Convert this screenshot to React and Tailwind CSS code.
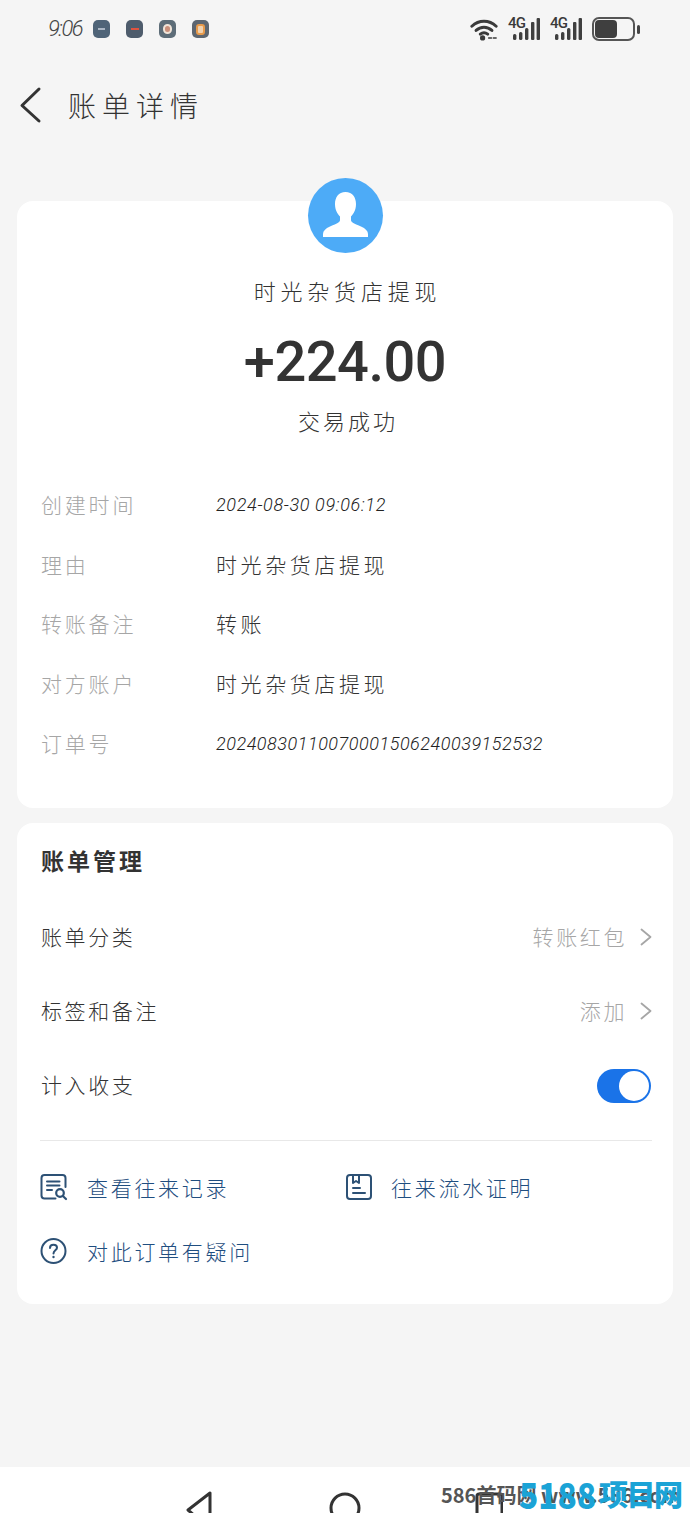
const details = [
  { label: "创建时间", value: "2024-08-30 09:06:12", cls: "text-[18px] font-light italic text-[#222] font-['Roboto',sans-serif] tracking-[0.66px]" },
  { label: "理由", value: "时光杂货店提现", cls: "text-[21px] font-light tracking-[3.6px] text-[#333]" },
  { label: "转账备注", value: "转账", cls: "text-[21px] font-light tracking-[3.6px] text-[#333]" },
  { label: "对方账户", value: "时光杂货店提现", cls: "text-[21px] font-light tracking-[3.6px] text-[#333]" },
  { label: "订单号", value: "20240830110070001506240039152532", cls: "text-[18px] font-light italic text-[#222] font-['Roboto',sans-serif] tracking-[0.53px]" },
];

function NotifIcons() {
  return (
    <div className="flex gap-[16px]">
      <div className="w-[17px] h-[18px] rounded-[5px] bg-[#4f6478] flex items-center justify-center">
        <div className="w-[7px] h-[2px] bg-[#aab6c4]" />
      </div>
      <div className="w-[17px] h-[18px] rounded-[5px] bg-[#4e5c6c] flex items-center justify-center">
        <div className="w-[8px] h-[2px] bg-[#e0533f]" />
      </div>
      <div className="w-[17px] h-[18px] rounded-[5px] bg-[#5d6d78] flex items-center justify-center">
        <div className="w-[9px] h-[10px] rounded-full border-2 border-[#f0e4d8] bg-[#c98f7a]" />
      </div>
      <div className="w-[17px] h-[18px] rounded-[5px] bg-[#5d6670] flex items-center justify-center">
        <div className="w-[9px] h-[11px] rounded-[3px] border-2 border-[#e79a4b] bg-[#f0d2b0]" />
      </div>
    </div>
  );
}

function Signal() {
  return (
    <div className="relative w-[32px] h-[24px]">
      <span className="absolute left-0 -top-[1px] text-[15px] leading-[15px] font-medium text-[#3a3a3a] font-['Roboto',sans-serif] tracking-[-0.8px]">4G</span>
      <svg className="absolute inset-0" width="32" height="24" viewBox="0 0 32 24" fill="#3f3f3f">
        <rect x="5" y="17" width="3.4" height="6" rx="1.5" />
        <rect x="11" y="15" width="3.4" height="8" rx="1.5" />
        <rect x="17" y="11" width="3.4" height="12" rx="1.5" />
        <rect x="23" y="5" width="3.4" height="18" rx="1" />
        <rect x="28.6" y="1" width="3.4" height="22" rx="1" />
      </svg>
    </div>
  );
}

function Wifi() {
  return (
    <svg width="28" height="23" viewBox="0 0 30 24" fill="none" stroke="#3a3a3a" strokeWidth="3.2" strokeLinecap="round">
      <path d="M2 8.5C9.5 1.5 20.5 1.5 28 8.5" />
      <path d="M6.5 13C11.5 8.5 18.5 8.5 23.5 13" />
      <path d="M11 17C13.5 15 16.5 15 19 17" />
      <circle cx="13.5" cy="21" r="2.8" fill="#3a3a3a" stroke="none" />
      <path d="M20 21h3M25 21h3" strokeWidth="1.6" />
    </svg>
  );
}

function Battery() {
  return (
    <div className="flex items-center gap-[2px]">
      <div className="w-[43px] h-[24px] rounded-[7px] border-2 border-[#555] p-[1px]">
        <div className="w-[22px] h-full rounded-[4px] bg-[#3f3f3f]" />
      </div>
      <div className="w-[3px] h-[9px] rounded-[2px] bg-[#444]" />
    </div>
  );
}

function Chevron() {
  return (
    <svg width="12" height="18" viewBox="0 0 12 18" fill="none" stroke="#a6a6a6" strokeWidth="1.8" strokeLinecap="round" strokeLinejoin="round" className="ml-[13px] -mr-[1px]">
      <path d="M1.5 1.5L10.5 9L1.5 16.5" />
    </svg>
  );
}

function RecordIcon() {
  return (
    <svg width="28" height="28" viewBox="1.5 0 28 28" fill="none" stroke="#2d5175" strokeWidth="2" strokeLinecap="round" className="overflow-visible">
      <path d="M16 25.5H5C3 25.5 2 24.5 2 22.5V5C2 3 3 2 5 2H23C25 2 26 3 26 5V14" />
      <path d="M7.5 8.5H20M7.5 12.5H20M7.5 17H12.5" />
      <circle cx="20.5" cy="20" r="3.8" strokeWidth="2.2" />
      <path d="M23.4 23L26.5 26" strokeWidth="2.2" />
    </svg>
  );
}

function ProofIcon() {
  return (
    <svg width="28" height="28" viewBox="0 0 28 28" fill="none" stroke="#2d5175" strokeWidth="2" strokeLinecap="round" strokeLinejoin="round">
      <rect x="2" y="2" width="24" height="24" rx="3" />
      <path d="M8 2V10L11 8L14 10V2" />
      <path d="M8 15H15M8 20H20" />
    </svg>
  );
}

function HelpIcon() {
  return (
    <svg width="28" height="28" viewBox="1.5 0 28 28" fill="none" stroke="#2d5175" strokeWidth="2" strokeLinecap="round" className="overflow-visible">
      <circle cx="14" cy="14" r="12" />
      <path d="M10.5 11C10.5 9 12 7.8 14 7.8C16 7.8 17.5 9 17.5 10.8C17.5 13.2 14 13.6 14 16.4" />
      <circle cx="14" cy="20" r="1.2" fill="#2d5175" stroke="none" />
    </svg>
  );
}

function LinkItem({ icon, text, width }) {
  return (
    <div className={`flex items-center gap-[18px] ${width}`}>
      {icon}
      <span className="text-[21px] leading-[28px] font-light tracking-[2.7px] text-[#1f4e80] whitespace-nowrap">{text}</span>
    </div>
  );
}

function ManageRow({ label, children }) {
  return (
    <div className="h-[74px] flex items-center justify-between">
      <span className="text-[21px] font-light tracking-[2.6px] text-[#333]">{label}</span>
      {children}
    </div>
  );
}

export default function App() {
  return (
    <div className="relative w-[690px] h-[1513px] overflow-hidden flex flex-col bg-[#f5f5f5] font-['Noto_Sans_CJK_SC','Noto_Sans',sans-serif]">
      {/* status bar */}
      <div className="h-[58px] flex items-center justify-between pl-[48px] pr-[50px] shrink-0">
        <div className="flex items-center">
          <span className="w-[45px] text-[22px] leading-none italic font-light text-[#444] tracking-[-1.5px] font-['Roboto',sans-serif]">9:06</span>
          <NotifIcons />
        </div>
        <div className="flex items-center gap-[10px]">
          <Wifi />
          <Signal />
          <Signal />
          <Battery />
        </div>
      </div>

      {/* header */}
      <div className="h-[94px] flex items-center pl-[18px] shrink-0">
        <svg width="26" height="38" viewBox="0 0 26 38" fill="none" stroke="#333" strokeWidth="3" strokeLinecap="round" strokeLinejoin="round">
          <path d="M21 3L4 19.5L21 35" />
        </svg>
        <h1 className="ml-[24px] text-[28px] leading-none font-light tracking-[6px] text-[#333]">账单详情</h1>
      </div>

      {/* bill card */}
      <div className="mt-[49px] mx-[17px] h-[607px] rounded-[16px] bg-white shrink-0 flex flex-col">
        <div className="-mt-[23px] self-center w-[75px] h-[75px] rounded-full bg-[#4dabf7] overflow-hidden shrink-0">
          <svg width="75" height="75" viewBox="0 0 75 75" fill="#fff">
            <path d="M37.5 14C30.5 14 27 19.5 27 26C27 32 29.5 36 32 38.5V42C32 44.5 28 46 22 48.5C17.5 50.5 15 53 15 56V59H60V56C60 53 57.5 50.5 53 48.5C47 46 43 44.5 43 42V38.5C45.5 36 48 32 48 26C48 19.5 44.5 14 37.5 14Z" />
          </svg>
        </div>
        <div className="mt-[21px] pl-[5px] text-center text-[22px] leading-[32px] font-light tracking-[4.8px] text-[#333]">时光杂货店提现</div>
        <div className="mt-[24px] text-center text-[56px] leading-[64px] font-medium tracking-[-0.5px] text-[#333] font-['Roboto',sans-serif]">+224.00</div>
        <div className="mt-[10px] pl-[6px] text-center text-[22px] leading-[32px] font-light tracking-[3px] text-[#333]">交易成功</div>
        <div className="mt-[39px] px-[24px] flex flex-col">
          {details.map((d) => (
            <div key={d.label} className="h-[59.7px] flex items-center">
              <span className="w-[175px] text-[21px] font-light tracking-[2.8px] text-[#a6a6a6]">{d.label}</span>
              <span className={d.cls}>{d.value}</span>
            </div>
          ))}
        </div>
      </div>

      {/* manage card */}
      <div className="mt-[15px] mx-[17px] h-[481px] rounded-[16px] bg-white shrink-0 pl-[24px] pr-[22px] pt-[19px] flex flex-col">
        <h2 className="text-[23px] leading-[36px] font-bold tracking-[3px] text-[#333]">账单管理</h2>
        <div className="mt-[22px] flex flex-col">
          <ManageRow label="账单分类">
            <div className="flex items-center text-[#a6a6a6]">
              <span className="text-[21px] font-light tracking-[2.6px]">转账红包</span>
              <Chevron />
            </div>
          </ManageRow>
          <ManageRow label="标签和备注">
            <div className="flex items-center text-[#a6a6a6]">
              <span className="text-[21px] font-light tracking-[2.6px]">添加</span>
              <Chevron />
            </div>
          </ManageRow>
          <ManageRow label="计入收支">
            <div className="mt-[2px] w-[54px] h-[34px] rounded-full bg-[#1a73e8] flex items-center justify-end pr-[2px]">
              <div className="w-[30px] h-[30px] rounded-full bg-white" />
            </div>
          </ManageRow>
        </div>
        <div className="mt-[18px] -mx-[1px] h-px bg-[#e8e8e8]" />
        <div className="mt-[32px] flex">
          <LinkItem icon={<RecordIcon />} text="查看往来记录" width="w-[304px]" />
          <LinkItem icon={<ProofIcon />} text="往来流水证明" width="" />
        </div>
        <div className="mt-[36px]">
          <LinkItem icon={<HelpIcon />} text="对此订单有疑问" width="" />
        </div>
      </div>

      {/* nav bar, cut off by the bottom of the picture */}
      <div className="mt-[163px] flex-1 bg-white flex pt-[24px] pl-[186px]">
        <svg width="26" height="40" viewBox="0 0 26 40" fill="none" stroke="#333" strokeWidth="3" strokeLinejoin="round" className="shrink-0">
          <path d="M24 2V38L2 19Z" />
        </svg>
        <svg width="32" height="40" viewBox="0 0 32 40" fill="none" stroke="#333" strokeWidth="3" className="ml-[117px] shrink-0">
          <circle cx="16" cy="17" r="14" />
        </svg>
        <svg width="28" height="40" viewBox="0 0 28 40" fill="none" stroke="#333" strokeWidth="3" className="ml-[114px] mt-[1px] shrink-0">
          <rect x="2" y="2" width="25" height="36" rx="2" />
        </svg>
      </div>

      {/* watermark */}
      <div className="absolute left-[441px] top-[1482px] text-[20px] leading-[26px] font-bold text-[#555] whitespace-nowrap">586首码网 www.586.com</div>
      <div className="absolute left-[519px] top-[1474px] h-[38px] flex items-center font-black text-[#1ba3d6] whitespace-nowrap">
        <span className="w-[80px] text-[36px] leading-none scale-x-[0.88] origin-left">5188</span>
        <span className="text-[29px] leading-none tracking-[-1.5px]">项目网</span>
      </div>
    </div>
  );
}
